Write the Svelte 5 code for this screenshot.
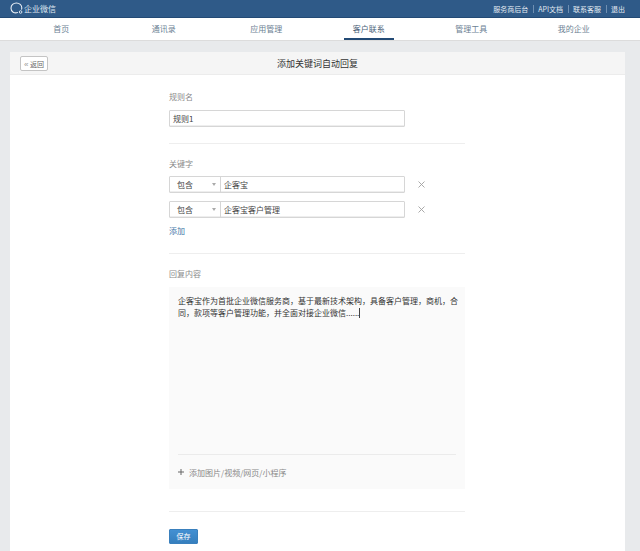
<script>
	const navItems = ['首页', '通讯录', '应用管理', '客户联系', '管理工具', '我的企业'];
	const topLinks = ['服务商后台', 'API文档', '联系客服', '退出'];
	const keywords = ['企客宝', '企客宝客户管理'];
	const active = '客户联系';
</script>

<div class="page">
	<header class="topbar">
		<div class="inner">
			<div class="logo">
				<svg width="14" height="13" viewBox="0 0 14 13" fill="none">
					<path d="M7.5 10.6C4.6 11.6 1 10 1 6.2 1 3.2 3.4 1 6.4 1c3 0 5.4 2.1 5.4 4.8 0 .5-.1 1-.2 1.4" stroke="#e8eef5" stroke-width="1.1" stroke-linecap="round" />
					<circle cx="10.6" cy="10" r="1.3" stroke="#e8eef5" stroke-width=".9" />
				</svg>
				<span>企业微信</span>
			</div>
			<div class="links">
				{#each topLinks as link, i}
					{#if i > 0}<i class="sep"></i>{/if}
					<span>{link}</span>
				{/each}
			</div>
		</div>
	</header>

	<nav class="nav">
		{#each navItems as item}
			<div class="nav-item" class:active={item === active}><span>{item}</span></div>
		{/each}
	</nav>

	<main class="card">
		<div class="card-head">
			<button type="button" class="back"><em>«</em> 返回</button>
			<h1>添加关键词自动回复</h1>
		</div>

		<div class="form">
			<section class="block first">
				<p class="label">规则名</p>
				<div class="input name">规则1</div>
			</section>

			<section class="block keywords">
				<p class="label">关键字</p>
				{#each keywords as word}
					<div class="kw-row">
						<div class="input kw">
							<div class="select">包含<i class="caret"></i></div>
							<div class="word">{word}</div>
						</div>
						<svg class="close" width="7" height="7" viewBox="0 0 7 7">
							<path d="M.5.5l6 6M6.5.5l-6 6" stroke="#a0a0a0" stroke-width=".9" />
						</svg>
					</div>
				{/each}
				<span class="add">添加</span>
			</section>

			<section class="block reply">
				<p class="label">回复内容</p>
				<div class="editor">
					<p class="text">企客宝作为首批企业微信服务商，基于最新技术架构，具备客户管理，商机，合同，款项等客户管理功能，并全面对接企业微信......<i class="cursor"></i></p>
					<div class="attach">
						<svg width="6" height="6" viewBox="0 0 6 6">
							<path d="M3 0v6M0 3h6" stroke="#666" stroke-width="1" />
						</svg>
						<span>添加图片/视频/网页/小程序</span>
					</div>
				</div>
			</section>

			<section class="block save-block">
				<button type="button" class="save">保存</button>
			</section>
		</div>
	</main>
</div>

<style>
	:global(body) {
		margin: 0;
		background: #e8eaec;
	}
	.page {
		height: 551px;
		overflow: hidden;
		font-family: "Noto Sans CJK SC", "Liberation Sans", sans-serif;
		font-size: 8px;
		color: #333;
	}
	.topbar {
		height: 17px;
		background: #2f5a88;
		border-bottom: 1px solid #234a75;
	}
	.inner {
		height: 100%;
		display: flex;
		justify-content: space-between;
		align-items: center;
		padding: 0 15px 0 10px;
	}
	.logo {
		display: flex;
		align-items: center;
		color: #dfe7f0;
		font-size: 8px;
	}
	.links {
		display: flex;
		align-items: center;
		gap: 4.5px;
		font-size: 7px;
		color: #e3eaf2;
	}
	.sep {
		width: 1px;
		height: 8px;
		background: #6f8fb2;
	}
	.nav {
		display: grid;
		grid-template-columns: repeat(6, 1fr);
		height: 22px;
		padding: 0 15px 0 10px;
		background: #fff;
		border-bottom: 1px solid #dcdcdc;
	}
	.nav-item {
		display: flex;
		justify-content: center;
		color: #6c7f94;
	}
	.nav-item span {
		width: 50px;
		height: 20px;
		line-height: 21px;
		text-align: center;
	}
	.nav-item.active span {
		color: #4a5f78;
		border-bottom: 2px solid #234a75;
	}
	.card {
		margin: 11px 15px 0 10px;
		background: #fff;
		border-radius: 2px 2px 0 0;
		height: 499px;
	}
	.card-head {
		position: relative;
		height: 22px;
		display: flex;
		align-items: center;
		justify-content: center;
		background: #f5f5f5;
		border-bottom: 1px solid #ececec;
	}
	.card-head h1 {
		margin: 0;
		font-size: 9px;
		font-weight: 400;
		color: #333;
	}
	.back {
		position: absolute;
		left: 10px;
		top: 4px;
		width: 28px;
		height: 15px;
		padding: 0;
		font: inherit;
		font-size: 7px;
		color: #666;
		background: #fff;
		border: 1px solid #c4c4c4;
		border-radius: 2px;
	}
	.back em {
		font-family: "Liberation Sans", sans-serif;
		font-size: 8px;
		font-style: normal;
		color: #999;
	}
	.form {
		width: 296px;
		margin-left: 159px;
	}
	.block {
		border-top: 1px solid #eeeeee;
	}
	.block.first {
		border-top: 0;
		padding-top: 16px;
		height: 68px;
		box-sizing: border-box;
	}
	.first .label {
		margin-bottom: 7px;
	}
	.label {
		margin: 0 0 8px;
		height: 12px;
		line-height: 12px;
		color: #8a8a8a;
	}
	.input {
		box-sizing: border-box;
		width: 236px;
		height: 17px;
		background: #fff;
		border: 1px solid #d6d6d6;
		box-shadow: inset 0 -1px 0 #eee;
		border-radius: 1px;
		color: #444;
		line-height: 15px;
	}
	.name {
		padding-left: 3px;
	}
	.keywords {
		height: 110px;
		box-sizing: border-box;
		padding-top: 14px;
	}
	.keywords .label {
		margin-bottom: 6px;
	}
	.kw-row {
		display: flex;
		align-items: center;
		gap: 13px;
		margin-bottom: 8px;
	}
	.kw {
		display: flex;
	}
	.select {
		position: relative;
		box-sizing: border-box;
		width: 51px;
		padding-left: 7px;
		border-right: 1px solid #d6d6d6;
	}
	.caret {
		position: absolute;
		right: 4px;
		top: 6px;
		border: 2px solid transparent;
		border-top: 3px solid #aaa;
		border-bottom: 0;
	}
	.word {
		padding-left: 3px;
	}
	.add {
		display: block;
		margin-top: -1px;
		line-height: 12px;
		color: #3f78a8;
	}
	.reply {
		height: 258px;
		box-sizing: border-box;
		padding-top: 14px;
	}
	.reply .label {
		margin-bottom: 7px;
	}
	.editor {
		box-sizing: border-box;
		height: 202px;
		padding: 8px 9px 0;
		display: flex;
		flex-direction: column;
		background: #fafafa;
	}
	.text {
		flex: 1;
		margin: 0 -2px 0 0;
		font-size: 8px;
		line-height: 11.5px;
		color: #333;
	}
	.cursor {
		display: inline-block;
		width: 1px;
		height: 10px;
		vertical-align: -2px;
		background: #444;
	}
	.attach {
		display: flex;
		align-items: center;
		gap: 5px;
		height: 34px;
		border-top: 1px solid #ebebeb;
		color: #888;
	}
	.attach svg {
		flex: none;
		margin-left: 0;
	}
	.save-block {
		padding-top: 16.5px;
	}
	.save {
		display: block;
		width: 29px;
		height: 15px;
		padding: 0;
		font: inherit;
		font-size: 7px;
		color: #fff;
		background: linear-gradient(#4390d2, #367fbe);
		border: 1px solid #3a80bd;
		border-radius: 1px;
	}
</style>
